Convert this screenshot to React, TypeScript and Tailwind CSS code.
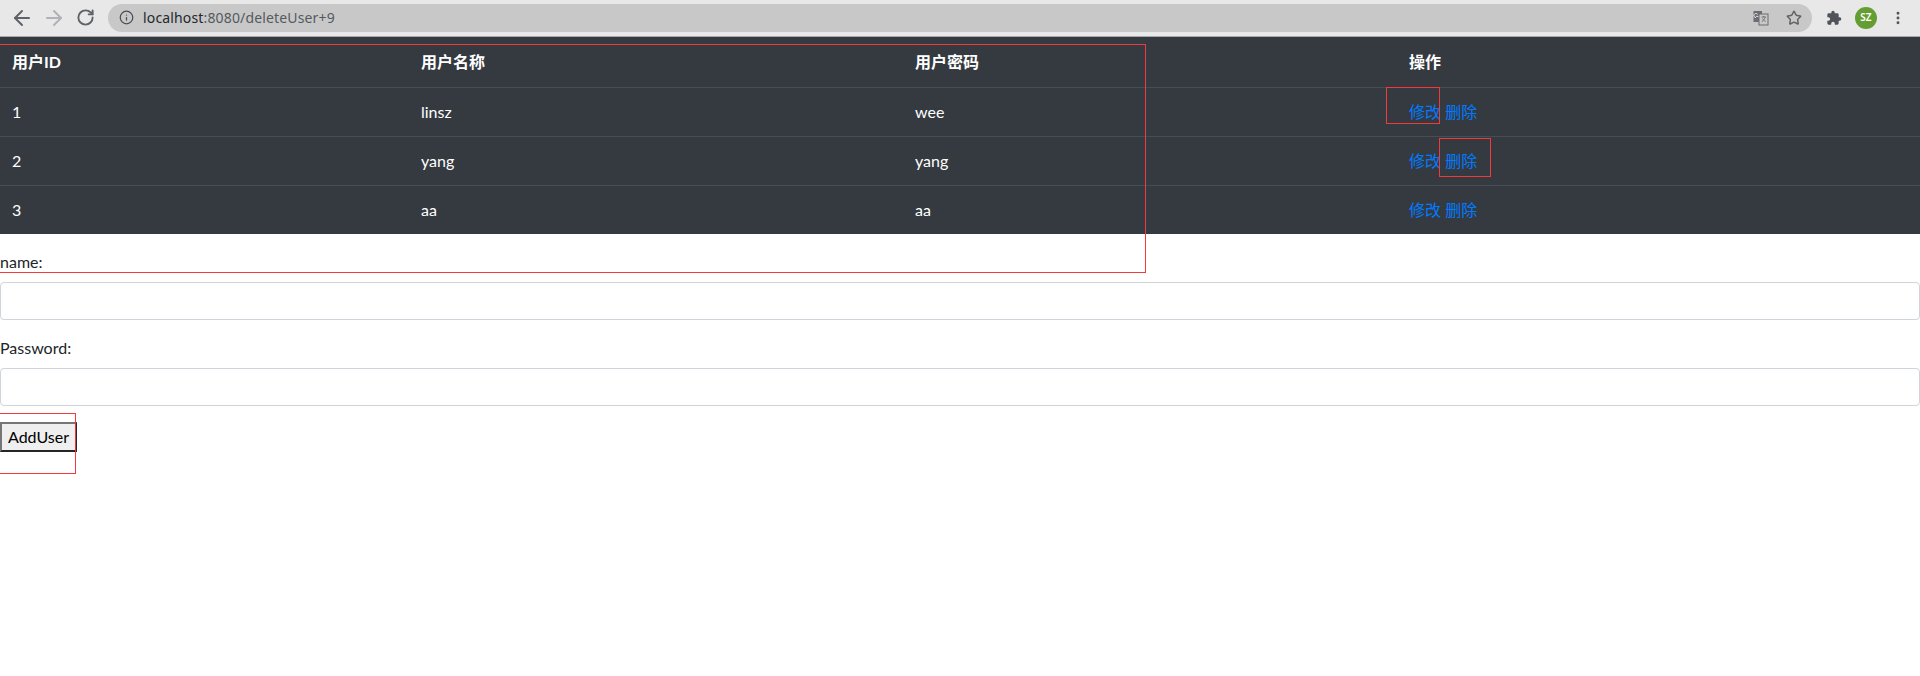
import { ArrowLeft, ArrowRight, RotateCw, Info, Star, MoreVertical } from "lucide-react";

const users = [
  { id: 1, name: "linsz", password: "wee" },
  { id: 2, name: "yang", password: "yang" },
  { id: 3, name: "aa", password: "aa" },
];

const font = "font-['Lato','Noto_Sans_CJK_SC',sans-serif]";

function Toolbar() {
  return (
    <div className="flex h-[37px] items-center border-b border-b-[#a9a9a9] bg-[#e8e8e8] pb-px">
      <div className="flex w-[108px] shrink-0 items-center gap-2 pl-[10px]">
        <ArrowLeft size={24} strokeWidth={2} className="shrink-0 text-[#5f6368]" />
        <ArrowRight size={24} strokeWidth={2} className="shrink-0 text-[#b0b2b5]" />
        <RotateCw size={19} strokeWidth={2.4} className="ml-[2px] shrink-0 text-[#5f6368]" />
      </div>
      <div className="flex h-[28px] w-[1704px] shrink-0 items-center rounded-full bg-[#c8c8c8] pl-[11px] pr-[10px]">
        <Info size={15} strokeWidth={2} className="shrink-0 text-[#494c50]" />
        <span className="ml-[9px] font-['Noto_Sans',sans-serif] text-[14px] tracking-[0.15px] text-[#555a60]">
          <span className="text-[#24272b]">localhost</span>:8080/deleteUser+9
        </span>
        <div className="ml-auto flex items-center gap-[17px]">
          <svg width="16" height="16" viewBox="0 0 16 16" className="shrink-0">
            <rect x="0.5" y="1" width="8.5" height="11" fill="#6a6d71" />
            <rect x="6" y="4" width="9" height="11" fill="#c8c8c8" stroke="#6a6d71" />
            <path d="M3 7.5a2 2 0 1 1 1.6-3.1M3.2 6.4h2.2" fill="none" stroke="#e8e8e8" strokeWidth="1" />
            <path d="M8.5 7h4.5M10.7 6v1M12.2 7c-.5 2-1.7 3.700-3.400 4.600M9.600 8.500c.6 1.200 1.500 2.200 3 3" fill="none" stroke="#6a6d71" strokeWidth="0.9" />
          </svg>
          <Star size={16} strokeWidth={2.2} className="shrink-0 text-[#5f6368]" />
        </div>
      </div>
      <svg width="16" height="16" viewBox="0 0 24 24" className="ml-[14px] shrink-0" fill="#50545a">
        <path d="M20.500 11H19V7a2 2 0 0 0-2-2h-4V3.500a2.500 2.500 0 0 0-5 0V5H4a2 2 0 0 0-2 2v3.800h1.500a2.700 2.700 0 0 1 0 5.400H2V20a2 2 0 0 0 2 2h3.800v-1.500a2.700 2.700 0 0 1 5.400 0V22H17a2 2 0 0 0 2-2v-4h1.500a2.500 2.500 0 0 0 0-5z" />
      </svg>
      <div className="ml-[13px] flex size-[22px] shrink-0 items-center justify-center rounded-full bg-[#649e32] font-['Noto_Sans',sans-serif] text-[10px] font-semibold text-white">
        SZ
      </div>
      <MoreVertical size={16} strokeWidth={2.4} className="ml-[13px] shrink-0 text-[#50545a]" />
    </div>
  );
}

function UserTable() {
  return (
    <table className="mb-4 w-full table-fixed border-collapse bg-[#343a40] text-[16px] text-white">
      <colgroup>
        <col className="w-[409px]" />
        <col className="w-[494px]" />
        <col className="w-[494px]" />
        <col />
      </colgroup>
      <thead>
        <tr className="h-[50px] text-left font-bold">
          <th className="pl-3 pt-[1px]">用户ID</th>
          <th className="pl-3 pt-[1px]">用户名称</th>
          <th className="pl-3 pt-[1px]">用户密码</th>
          <th className="pl-3 pt-[1px]">操作</th>
        </tr>
      </thead>
      <tbody>
        {users.map((user) => (
          <tr key={user.id} className="h-[49px] border-t border-t-[#454d55]">
            <td className="pl-3 pt-px">{user.id}</td>
            <td className="pl-3 pt-px">{user.name}</td>
            <td className="pl-3 pt-px">{user.password}</td>
            <td className="pl-3 pt-px text-[#007bff]">
              <a href="#">修改</a> <a href="#">删除</a>
            </td>
          </tr>
        ))}
      </tbody>
    </table>
  );
}

function Field({ label }: { label: string }) {
  return (
    <div className="mb-4">
      <label className="mb-2 block h-6 leading-6 text-[#212529]">{label}</label>
      <input className="block h-[38px] w-full rounded border border-[#ced4da] bg-white" />
    </div>
  );
}

export default function App() {
  return (
    <div className={`relative min-h-[676px] overflow-hidden bg-white text-[16px] ${font}`}>
      <Toolbar />
      <UserTable />
      <form>
        <Field label="name:" />
        <Field label="Password:" />
        <button
          type="button"
          className="block h-[30px] w-[77px] border-2 border-t-[#767676] border-r-[#252525] border-b-[#252525] border-l-[#767676] bg-[#efefef] text-[16px] text-black"
        >
          AddUser
        </button>
      </form>

      {/* 红色标注框 */}
      <div className="pointer-events-none absolute left-[-1px] top-[44px] h-[229px] w-[1147px] border border-[#f33a3a]" />
      <div className="pointer-events-none absolute left-[1386px] top-[87px] h-[37px] w-[54px] border border-[#f33a3a]" />
      <div className="pointer-events-none absolute left-[1439px] top-[138px] h-[39px] w-[52px] border border-[#f33a3a]" />
      <div className="pointer-events-none absolute left-[-1px] top-[413px] h-[61px] w-[77px] border border-[#f33a3a]" />
    </div>
  );
}
